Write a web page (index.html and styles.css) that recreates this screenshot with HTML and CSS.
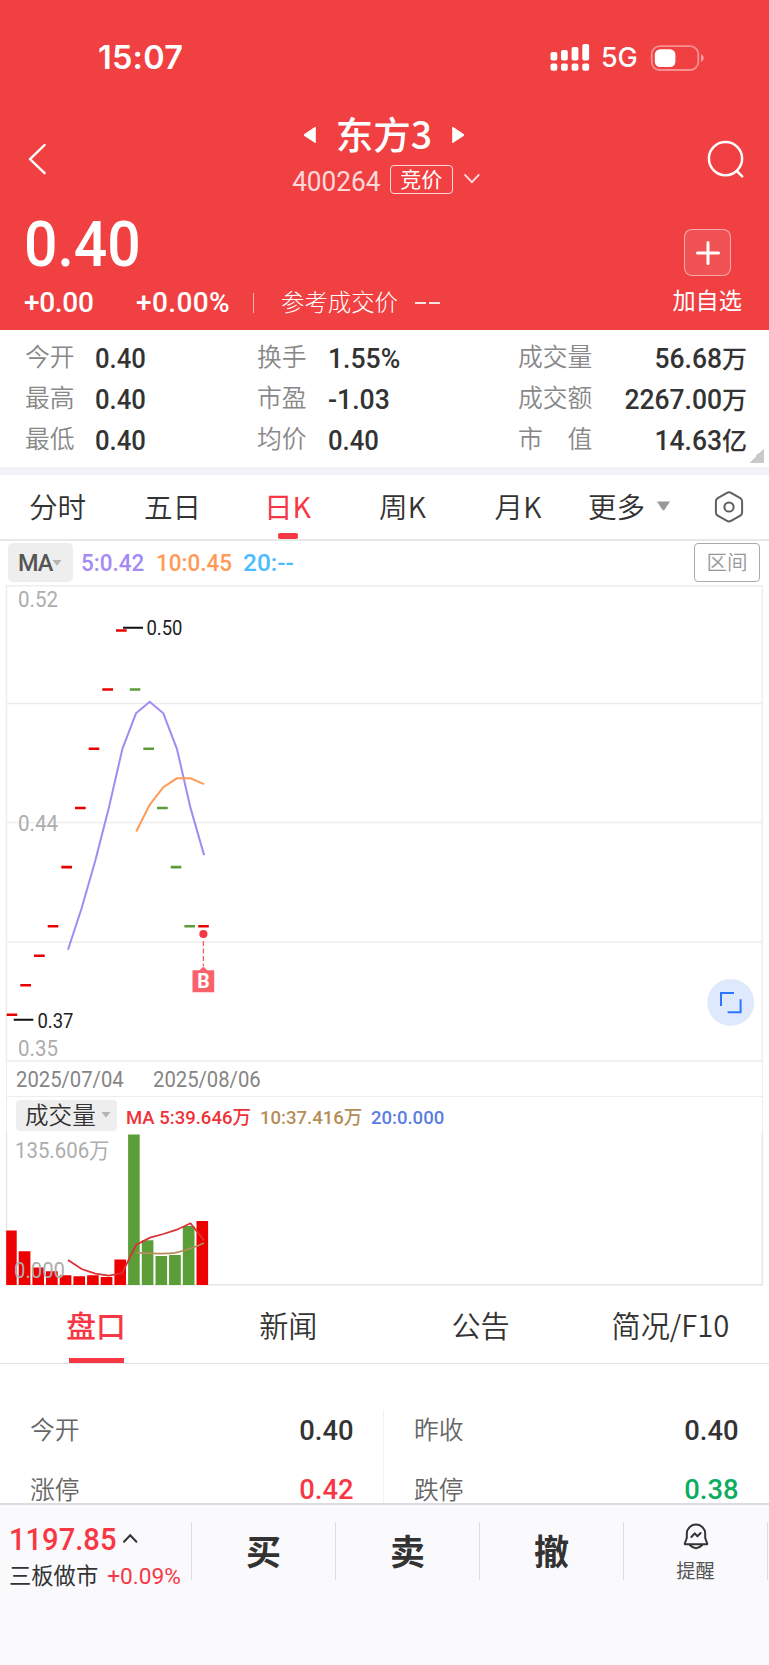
FILE: index.html
```html
<!DOCTYPE html>
<html lang="zh-CN">
<head>
<meta charset="utf-8">
<title>东方3 400264</title>
<link rel="stylesheet" href="styles.css">
</head>
<body>
<header class="hero">
  <div class="status">
    <span class="clock">15:07</span>
    <svg class="signal" width="40" height="28" viewBox="551 44 40 28" fill="#fff">
      <rect x="551.5" y="52" width="6.8" height="8.4" rx="2"/><rect x="562" y="50" width="6.8" height="10.4" rx="2"/><rect x="572.6" y="47" width="6.8" height="13.4" rx="2"/><rect x="583.3" y="44" width="6.8" height="16.4" rx="2"/>
      <rect x="551.5" y="63.4" width="6.8" height="7.4" rx="2"/><rect x="562" y="63.4" width="6.8" height="7.4" rx="2"/><rect x="572.6" y="63.4" width="6.8" height="7.4" rx="2"/><rect x="583.3" y="63.4" width="6.8" height="7.4" rx="2"/>
    </svg>
    <span class="net">5G</span>
    <svg width="54" height="28" viewBox="651 43 54 28">
      <rect x="652.7" y="45.2" width="46.6" height="23.8" rx="8" fill="none" stroke="#fff" stroke-opacity=".42" stroke-width="1.8"/>
      <rect x="655.8" y="48.2" width="20.6" height="17.8" rx="5.4" fill="#fff"/>
      <path d="M702 53.2c3.6 1.4 3.6 6.2 0 7.6z" fill="#fff" fill-opacity=".5"/>
    </svg>
  </div>
  <div class="nav">
    <svg class="nav-icon" width="24" height="36" viewBox="26 141 24 36" fill="none" stroke="#fff" stroke-width="2.4" stroke-linecap="round" stroke-linejoin="round"><path d="M45.6 145 31 159.2l14.6 14"/></svg>
    <div class="title-block">
      <div class="title-row">
        <svg width="14" height="18" viewBox="0 0 14 18"><path d="M12.8 1.6v14.8q0 1-1 .4L1.400 10q-1.200-1 0-2L11.800 1.100q1-.6 1 .5z" fill="#fff"/></svg>
        <h1>东方3</h1>
        <svg width="14" height="18" viewBox="0 0 14 18"><path d="M1.200 1.600v14.800q0 1 1 .4L12.600 10q1.200-1 0-2L2.200 1.100q-1-.6-1 .5z" fill="#fff"/></svg>
      </div>
      <div class="code-row">
        <span class="code">400264</span><span class="badge">竞价</span>
        <svg width="18" height="12" viewBox="0 0 18 12" fill="none" stroke="#fff" stroke-opacity=".85" stroke-width="1.7" stroke-linecap="round"><path d="m2 1.800 6.900 7.400L15.800 1.800"/></svg>
      </div>
    </div>
    <svg class="nav-icon" width="42" height="42" viewBox="705 138 42 42" fill="none" stroke="#fff" stroke-width="2.5" stroke-linecap="round"><circle cx="725.500" cy="158.600" r="16.600"/><path d="m736.800 171 5.400 5.400"/></svg>
  </div>
  <div class="quote">
    <div class="quote-main">
      <div class="price">0.40</div>
      <div class="changes">
        <span class="chg chg-a">+0.00</span><span class="chg chg-b">+0.00%</span><i class="bar"></i><span class="ref">参考成交价</span><span class="dash"><i></i><i></i></span>
      </div>
    </div>
    <div class="add">
      <span class="add-box"><svg width="26" height="26" viewBox="0 0 26 26" stroke="#fff" stroke-width="3" stroke-linecap="round"><path d="M13 2.600v21M2.500 13h21"/></svg></span>
      <span class="add-label">加自选</span>
    </div>
  </div>
</header>

<section class="stats">
  <span class="k">今开</span><span class="v">0.40</span><span class="k">换手</span><span class="v wide">1.55%</span><span class="k">成交量</span><span class="v r">56.68<b>万</b></span>
  <span class="k">最高</span><span class="v">0.40</span><span class="k">市盈</span><span class="v wide">-1.03</span><span class="k">成交额</span><span class="v r">2267.00<b>万</b></span>
  <span class="k">最低</span><span class="v">0.40</span><span class="k">均价</span><span class="v">0.40</span><span class="k">市　值</span><span class="v r">14.63<b>亿</b></span>
  <i class="corner"></i>
</section>

<nav class="periods">
  <span>分时</span><span>五日</span><span class="on">日K</span><span>周K</span><span>月K</span>
  <span class="more">更多<svg width="15" height="10" viewBox="0 0 15 10"><path d="M1 .5h13L8.600 8.700q-1.100 1.300-2.200 0z" fill="#999"/></svg></span>
  <span class="gear"><svg width="30" height="32" viewBox="0 0 30 32" fill="none" stroke="#606060" stroke-width="2"><path d="M13 1.900q2-1.100 4 0l9.300 5.300q1.800 1 1.800 3.100v11.200q0 2-1.800 3.100L17 29.900q-2 1.100-4 0l-9.300-5.300q-1.800-1-1.800-3.100V10.300q0-2 1.800-3.100z"/><circle cx="15" cy="16" r="4.600"/></svg></span>
</nav>

<div class="ma-row">
  <span class="ma-chip">MA<svg width="10" height="6" viewBox="0 0 10 6"><path d="M.5 0h9L5 5.800z" fill="#b4b4b4"/></svg></span>
  <span class="ma5">5:0.42</span><span class="ma10">10:0.45</span><span class="ma20">20:--</span>
  <span class="range">区间</span>
</div>

<section class="charts">
  <svg class="chart" width="769" height="477" viewBox="0 585 769 477">
    <g stroke="#ededee" stroke-width="1.500" fill="none">
      <path d="M6 585.750h757M6 703.500h757M6 822.500h757M6 942h757M6 1061h757M6.500 585v477M762.300 585v477"/>
    </g>
    <g class="axis">
      <text x="18" y="606.500" textLength="40" lengthAdjust="spacingAndGlyphs">0.52</text>
      <text x="18" y="831.300" textLength="40" lengthAdjust="spacingAndGlyphs">0.44</text>
      <text x="18" y="1056" textLength="40" lengthAdjust="spacingAndGlyphs">0.35</text>
    </g>
    <g stroke="#e80000" stroke-width="2.600">
      <path d="M6.700 1014.800h10.500M20.300 985.300H31M34 955.800h10.700M47.700 926.200h10.600M61.300 867.100H72M75 808h10.700M88.700 748.700h10.600M102.300 689.500H113M116 630.500h10.700M198.200 926.200h10.600"/>
    </g>
    <g stroke="#5b9d37" stroke-width="2.600">
      <path d="M129.800 689.500h10.500M143.300 748.700H154M157 808h10.700M170.800 867.100h10.500M184.400 926.200H195"/>
    </g>
    <polyline fill="none" stroke="#a38af2" stroke-width="2" points="68,949.700 81.600,908.300 95.200,861 108.800,807.900 122.400,748.800 136,713.300 149.700,701.700 163.300,713.300 176.900,748.800 190.500,807.900 204.100,855.100"/>
    <polyline fill="none" stroke="#ff9a56" stroke-width="2" points="136.200,831.500 149.700,804.900 163.300,787.200 176.900,778.300 190.500,778.300 204.100,784.200"/>
    <path d="M123 627.700h20M13.700 1019.700h19.600" stroke="#111" stroke-width="1.900"/>
    <g class="mark">
      <text x="146.500" y="635.200" textLength="36" lengthAdjust="spacingAndGlyphs">0.50</text>
      <text x="37.500" y="1027.500" textLength="36" lengthAdjust="spacingAndGlyphs">0.37</text>
    </g>
    <circle cx="203.400" cy="934" r="4.100" fill="#f83844"/>
    <path d="M203.400 941v25" stroke="#f9606c" stroke-width="1.400" stroke-dasharray="5 2.500"/>
    <path d="M192.500 970.300h7l3.900-3.800 3.900 3.800h6.900v21.900h-21.700z" fill="#fb616b"/>
    <text class="buy" x="203.400" y="988.200" text-anchor="middle">B</text>
    <circle cx="730.700" cy="1002.400" r="23.500" fill="#dfe9fe"/>
    <path d="M734 993h-13v13M727.600 1012.200h13V999.200" fill="none" stroke="#2b78ff" stroke-width="2"/>
  </svg>
  <div class="dates"><span>2025/07/04</span><span>2025/08/06</span></div>
  <div class="vol-head">
    <span class="vol-chip"><span>成交量</span><svg width="10" height="6" viewBox="0 0 10 6"><path d="M.5 0h9L5 5.800z" fill="#b4b4b4"/></svg></span>
    <div class="vol-ma"><span class="vm5">MA 5:39.646万</span><span class="vm10">10:37.416万</span><span class="vm20">20:0.000</span></div>
  </div>
  <svg class="chart" width="769" height="153" viewBox="0 1133 769 153">
    <path d="M6.500 1133v152M762.300 1133v152M6 1284.800h757" stroke="#e6e6e7" stroke-width="1.500"/>
    <g fill="#ec0000">
      <path d="M6.200 1230.400h10.500V1285H6.200zM18.700 1251.200h11.700V1285H18.700zM32.400 1267.400H44V1285H32.400zM46 1271.200h11.700V1285H46zM59.700 1275.200h11.700V1285H59.700zM73.400 1276.200H85V1285H73.400zM87.100 1275.200h11.600V1285H87.100zM100.700 1277h11.700v8h-11.700zM114.400 1259.400H126V1285h-11.600zM196.500 1221.100h11.600V1285h-11.600z"/>
    </g>
    <g fill="#5b9d37">
      <path d="M128.100 1134.400h11.600V1285h-11.600zM141.800 1240.200h11.600V1285h-11.600zM155.500 1256h11.600v29h-11.600zM169.100 1255h11.700v30h-11.700zM182.800 1226h11.700v59h-11.700z"/>
    </g>
    <g class="axis">
      <text x="15" y="1157.500" textLength="94.500" lengthAdjust="spacingAndGlyphs">135.606万</text>
      <text x="14" y="1278.400" textLength="51" lengthAdjust="spacingAndGlyphs">0.000</text>
    </g>
    <path d="M136.200 1252.700C150 1253.300 163 1254.600 176 1252.700C187 1250 195 1247.500 204 1243" fill="none" stroke="#b48d58" stroke-width="1.800"/>
    <polyline fill="none" stroke="#dd3036" stroke-width="1.800" points="68,1260 81.600,1269 95.300,1273.600 108.800,1275.600 122,1273.300 136,1245 150,1237.700 163.400,1234 176.800,1229.700 190.500,1223.300 204,1240.400"/>
  </svg>
</section>

<nav class="tabs">
  <span class="on">盘口</span><span>新闻</span><span>公告</span><span class="last">简况/F10</span>
</nav>

<section class="board">
  <div class="pair"><span class="lab">今开</span><span class="num">0.40</span></div>
  <div class="pair"><span class="lab">昨收</span><span class="num">0.40</span></div>
  <div class="pair"><span class="lab">涨停</span><span class="num up">0.42</span></div>
  <div class="pair"><span class="lab">跌停</span><span class="num down">0.38</span></div>
</section>

<footer class="dock">
  <div class="index">
    <div class="index-a"><span class="index-v">1197.85</span><svg width="16" height="11" viewBox="0 0 16 11" fill="none" stroke="#333" stroke-width="2" stroke-linecap="round"><path d="m2 8.800 6.200-6.600 6.200 6.600"/></svg></div>
    <div class="index-b"><span class="index-n">三板做市</span><span class="index-c">+0.09%</span></div>
  </div>
  <div class="act">买</div><div class="act">卖</div><div class="act">撤</div>
  <div class="remind">
    <svg width="28" height="28" viewBox="0 0 28 28" fill="none" stroke="#333" stroke-width="2" stroke-linejoin="round" stroke-linecap="round"><path d="M4.800 16v-4.500a9.200 8.900 0 0 1 18.400 0V16l2 5.500q.2.700-.6.700H3.400q-.8 0-.6-.7zM7.800 23q6.200 6.400 12.400 0"/><path d="m9.400 15 3.300-3.600 2.700 2.800 3.200-3.200"/></svg>
    <span>提醒</span>
  </div>
</footer>
</body>
</html>
```
FILE: styles.css
```css
* { box-sizing: border-box; }
body {
  margin: 0;
  width: 769px;
  height: 1665px;
  overflow: hidden;
  display: flex;
  flex-direction: column;
  background: #fff;
  color: #333;
  font-family: Roboto, "Noto Sans CJK SC", sans-serif;
}
svg { display: block; flex: none; }
i { font-style: normal; }
span, h1, .price { white-space: nowrap; }

.hero { height: 330px; flex: none; background: #f04042; color: #fff; }
.status { height: 115px; padding: 0 65px 0 98px; display: flex; align-items: center; }
.clock { flex: 1; font: 600 32.500px/40px Inter, sans-serif; letter-spacing: .2px; }
.net { width: 60px; padding-left: 11px; font: 500 27px/36px Inter, sans-serif; letter-spacing: -0.300px; }

.nav { height: 86px; padding: 0 22px 0 25px; display: flex; justify-content: space-between; align-items: center; }
.nav-icon { margin-top: 2px; }
.title-block { display: flex; flex-direction: column; align-items: center; padding-left: 14px; }
.title-row { display: flex; align-items: center; gap: 19px; height: 38px; }
h1 { margin: 0 0 5px; font: 500 37.500px/38px "Noto Sans CJK SC", sans-serif; }
.code-row { display: flex; align-items: center; height: 46px; padding-top: 4px; margin-right: 1px; }
.code { font-size: 28px; line-height: 30px; padding-top: 5px; opacity: .8; transform: scaleX(.935); transform-origin: right; }
.badge { margin: 0 10px 0 9px; width: 63px; height: 29px; border: 1.500px solid rgba(255,255,255,.8); border-radius: 4px; text-align: center; font: 400 21px/25px "Noto Sans CJK SC", sans-serif; }

.quote { height: 129px; display: flex; justify-content: space-between; padding: 0 27px 0 24px; }
.price { font-weight: 500; font-size: 63px; line-height: 74px; padding-top: 7px; transform: scaleX(.935); transform-origin: left; }
.changes { display: flex; align-items: center; height: 44px; padding-bottom: 2px; }
.chg { font-weight: 500; font-size: 28px; line-height: 36px; }
.chg-a { width: 112px; letter-spacing: -.3px; }
.chg-b { width: 117px; letter-spacing: .4px; }
.bar { width: 1px; height: 20px; background: rgba(255,255,255,.6); }
.ref { margin: 0 0 5px 27px; font: 300 23.400px/30px "Noto Sans CJK SC", sans-serif; }
.dash { display: flex; gap: 3px; margin-left: 17px; }
.dash i { width: 11px; height: 1.500px; background: rgba(255,255,255,.85); }
.add { display: flex; flex-direction: column; align-items: center; padding-top: 28px; }
.add-box { width: 47px; height: 47px; margin-right: -1px; border: 1.300px solid rgba(255,255,255,.5); border-radius: 8px; background: rgba(255,255,255,.1); display: grid; place-items: center; }
.add-label { font: 400 23.200px/30px "Noto Sans CJK SC", sans-serif; margin-top: 8px; }

.stats { position: relative; flex: none; height: 145px; padding: 7px 22px 15px 25px; border-bottom: 8px solid #f2f3f8; display: grid; grid-template-columns: 70px 162px 71px 190px 90px 1fr; grid-template-rows: repeat(3, 41px); align-items: center; }
.k { margin-bottom: 5px; font: 350 24.800px/36px "Noto Sans CJK SC", sans-serif; color: #888; }
.v { font-weight: 500; font-size: 27px; line-height: 36px; color: #333; padding-top: 3px; transform: scaleX(.95); transform-origin: left; }
.v b { font: 500 25.500px/30px "Noto Sans CJK SC", sans-serif; }
.wide { transform: scaleX(.985); }
.r { text-align: right; transform: scaleX(.98); transform-origin: right; }
.corner { position: absolute; right: 5px; bottom: 4px; width: 15px; height: 15px; background: linear-gradient(135deg, transparent 50%, #c9c9c9 50%); }

.periods { flex: none; height: 66px; border-bottom: 2px solid #e8e8e8; display: grid; grid-template-columns: 115px 115px 115px 115px 116px 110px 1fr; align-items: stretch; font: 350 28.600px/62px "Noto Sans CJK SC", sans-serif; }
.periods > span { text-align: center; }
.periods .on { color: #f83745; font-weight: 400; display: flex; flex-direction: column; align-items: center; }
.periods .on::after { content: ""; width: 20px; height: 6px; border-radius: 2px; background: #f83745; margin-top: -4px; }
.periods .more { display: flex; align-items: center; padding: 0 0 2px 12px; gap: 11px; }
.periods .gear { display: grid; place-items: center; padding-left: 2px; }

.ma-row { flex: none; height: 44px; padding: 2px 9px 3px 8px; display: flex; align-items: center; font-weight: 500; font-size: 23.500px; line-height: 38px; }
.ma-chip { width: 65px; height: 39px; border-radius: 5px; background: #eee; color: #555; display: flex; align-items: center; padding-left: 10px; letter-spacing: -1px; }
.ma5, .ma10, .ma20 { transform: scaleX(.955); transform-origin: left; }
.ma5 { color: #a38af5; width: 75px; margin-left: 8px; }
.ma10 { color: #ff9a56; width: 87px; }
.ma20 { color: #4cbcff; transform: scaleX(1.04); }
.range { margin-left: auto; width: 66px; height: 39px; border: 1.500px solid #aaa; border-radius: 4px; text-align: center; color: #999; font: 350 20.600px/35px "Noto Sans CJK SC", sans-serif; }

.charts { flex: none; height: 705px; }
.axis text { font-family: Roboto, "Noto Sans CJK SC", sans-serif; font-size: 21.500px; fill: #adadad; }
.mark text { font-size: 19.500px; fill: #222; }
.buy { font: 700 19.500px Roboto, sans-serif; fill: #fff; }
.dates, .vol-head { margin: 0 6px; border: solid #ededee; border-width: 0 1px; }
.dates { height: 35px; border-bottom-width: 1.500px; display: flex; align-items: center; padding: 0 0 0 9px; font-size: 22px; color: #858585; }
.dates span { width: 137px; transform: scaleX(.92); transform-origin: left; }
.vol-head { height: 36px; padding: 3px 9px; display: flex; align-items: center; font-weight: 500; font-size: 19px; }
.vol-chip { width: 101px; height: 31px; border-radius: 4px; background: #eee; color: #333; display: flex; align-items: center; padding-left: 9px; gap: 5px; font: 350 23.600px/28px "Noto Sans CJK SC", sans-serif; }
.vol-chip span { margin-bottom: 2px; }
.vol-ma { display: flex; align-items: baseline; padding-left: 9px; }
.vol-ma span { transform: scaleX(.975); transform-origin: left; }
.vm5 { color: #ee3238; width: 134px; }
.vm10 { color: #b48d58; width: 111px; }
.vm20 { color: #5c7de0; }

.tabs { flex: none; height: 74px; border-bottom: 1px solid #e4e4e6; display: grid; grid-template-columns: repeat(4, 1fr); font: 350 29.200px/68px "Noto Sans CJK SC", sans-serif; }
.tabs span { text-align: center; }
.tabs .on { color: #f83745; font-size: 29.800px; font-weight: 500; display: flex; flex-direction: column; align-items: center; }
.tabs .on::after { content: ""; width: 55px; height: 5px; background: #f83745; }
.tabs .last { padding-right: 5px; }

.board { flex: none; height: 139px; padding-top: 46px; display: grid; grid-template-columns: 384px 385px; grid-template-rows: 51px 42px; }
.pair { display: flex; justify-content: space-between; align-items: center; padding: 0 29px 10px 30px; line-height: 36px; }
.pair:nth-child(odd) { border-right: 1px solid #f2f2f2; }
.pair:nth-child(even) { padding-right: 30px; }
.pair:nth-child(n+3) { padding-top: 16px; padding-bottom: 0; }
.lab { margin-bottom: 6px; font: 350 24.800px/28px "Noto Sans CJK SC", sans-serif; color: #666; }
.pair:nth-child(n+3) .lab { margin-bottom: 4px; }
.num { font-weight: 500; font-size: 28.500px; color: #333; transform: scaleX(.96); transform-origin: right; }
.up { color: #f83745; }
.down { color: #0bad60; }

.dock { flex: 1; border-top: 2px solid #dcdce0; background: #fafafd; display: grid; grid-template-columns: 192px 144px 144px 144px 144px; grid-template-rows: 58px; padding-top: 17px; }
.dock > div { border-right: 1px solid #dedee2; }
.index { padding-left: 9px; }
.index-a { display: flex; align-items: center; height: 36px; }
.index-v { width: 113px; font-weight: 500; font-size: 31px; line-height: 36px; color: #f83745; transform: scaleX(.94); transform-origin: left; }
.index-a svg { margin-bottom: 3px; }
.index-b { display: flex; align-items: center; gap: 9px; height: 36px; }
.index-n { margin-bottom: 4px; font: 400 22.300px/30px "Noto Sans CJK SC", sans-serif; }
.index-c { font-size: 22.700px; color: #f83745; }
.act { text-align: center; font: 700 35px/55px "Noto Sans CJK SC", sans-serif; }
.remind { display: flex; flex-direction: column; align-items: center; font: 400 19.300px/28px "Noto Sans CJK SC", sans-serif; color: #555; gap: 6px; }
```
